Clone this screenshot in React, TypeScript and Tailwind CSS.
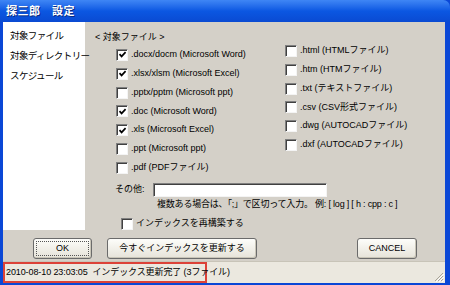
import React from "react";

const FONT = "font-['Liberation_Sans','Noto_Sans_CJK_JP',sans-serif]";

function CheckBox({ checked }: { checked?: boolean }) {
  return (
    <span className="w-[12px] h-[12px] shrink-0 bg-white border border-t-[#808080] border-l-[#808080] border-b-[#f4f4f4] border-r-[#f4f4f4] shadow-[inset_1px_1px_0_#404040] flex items-center justify-center">
      {checked && (
        <svg width="9" height="9" viewBox="0 0 9 9">
          <path d="M1.5 4.2 L3.6 6.4 L7.6 2.2" fill="none" stroke="#000" strokeWidth="1.7" />
        </svg>
      )}
    </span>
  );
}

function Row({ checked, label }: { checked?: boolean; label: string }) {
  return (
    <div className="h-[18.8px] flex items-center gap-[3px]">
      <CheckBox checked={checked} />
      <span className="whitespace-nowrap">{label}</span>
    </div>
  );
}

function Btn({ children, w, focus }: { children: React.ReactNode; w: string; focus?: boolean }) {
  return (
    <div
      className={`${w} h-[21px] rounded-[3px] border border-[#6b6b6b] bg-gradient-to-b from-[#fdfdfa] to-[#e6e3d9] shadow-[inset_-1px_-1px_0_#c9c5b8] flex items-center justify-center p-[2px]`}
    >
      <div className={`w-full h-full flex items-center justify-center whitespace-nowrap ${focus ? "border border-dotted border-[#555]" : ""}`}>
        {children}
      </div>
    </div>
  );
}

export default function App() {
  const left = [
    { c: true, l: ".docx/docm (Microsoft Word)" },
    { c: true, l: ".xlsx/xlsm (Microsoft Excel)" },
    { c: false, l: ".pptx/pptm (Microsoft ppt)" },
    { c: true, l: ".doc (Microsoft Word)" },
    { c: true, l: ".xls (Microsoft Excel)" },
    { c: false, l: ".ppt (Microsoft ppt)" },
    { c: false, l: ".pdf (PDFファイル)" },
  ];
  const right = [
    ".html (HTMLファイル)",
    ".htm (HTMファイル)",
    ".txt (テキストファイル)",
    ".csv (CSV形式ファイル)",
    ".dwg (AUTOCADファイル)",
    ".dxf (AUTOCADファイル)",
  ];
  return (
    <div className={`w-[450px] h-[285px] overflow-hidden flex flex-col bg-[#0a47d6] text-[9px] text-black ${FONT}`}>
      {/* title bar */}
      <div className="h-[22px] shrink-0 rounded-tr-[7px] bg-gradient-to-b from-[#3f86f5] via-[#0b57e2] to-[#0a4ad2] flex items-center pl-[6px]">
        <span className="text-white font-bold text-[11px] tracking-[0.5px] [text-shadow:1px_1px_0_#0a2a80]">探三郎　設定</span>
      </div>
      {/* body */}
      <div className="flex-1 flex flex-col border-l-[3px] border-r-[5px] border-[#0a47d6] bg-[#d4d0c8] min-h-0">
        <div className="h-[208px] flex shrink-0">
          {/* left nav */}
          <div className="w-[82px] bg-white flex flex-col pt-[4px] pl-[7px] tracking-[-0.6px] text-[9.5px]">
            <div className="h-[20px] flex items-center whitespace-nowrap">対象ファイル</div>
            <div className="h-[20px] flex items-center whitespace-nowrap">対象ディレクトリー</div>
            <div className="h-[20px] flex items-center whitespace-nowrap">スケジュール</div>
          </div>
          {/* main pane */}
          <div className="flex-1 flex flex-col">
            <div className="h-[12px] mt-[10px] pl-[10px] flex items-center whitespace-nowrap">&lt; 対象ファイル &gt;</div>
            <div className="flex pl-[31px] mt-[1.6px]">
              <div className="w-[169px] flex flex-col">
                {left.map((r) => (
                  <Row key={r.l} checked={r.c} label={r.l} />
                ))}
              </div>
              <div className="flex flex-col -mt-[4px]">
                {right.map((r) => (
                  <Row key={r} label={r} />
                ))}
              </div>
            </div>
            <div className="flex items-center mt-[6px] pl-[30px] h-[14px]">
              <span className="w-[38px] whitespace-nowrap">その他:</span>
              <div className="w-[174px] h-[14px] bg-white border border-t-[#808080] border-l-[#808080] border-b-[#f4f4f4] border-r-[#f4f4f4] shadow-[inset_1px_1px_0_#404040]" />
            </div>
            <div className="h-[12px] mt-[2px] pl-[72px] flex items-center whitespace-nowrap tracking-[-0.2px]">
              複数ある場合は、「;」で区切って入力。 例: [ log ] [ h : cpp : c ]
            </div>
            <div className="h-[12px] mt-[7px] pl-[36px] flex items-center gap-[3px]">
              <CheckBox />
              <span className="whitespace-nowrap">インデックスを再構築する</span>
            </div>
          </div>
        </div>
        {/* buttons */}
        <div className="h-[31px] shrink-0 flex items-start pt-[8px] pl-[30px]">
          <Btn w="w-[59px]" focus>OK</Btn>
          <div className="w-[15px]" />
          <Btn w="w-[150px]">今すぐインデックスを更新する</Btn>
          <div className="w-[100px]" />
          <Btn w="w-[60px]">CANCEL</Btn>
        </div>
        {/* status bar */}
        <div className="h-[22px] shrink-0 bg-[#ebe8df] border-t border-[#c8c4b8] flex items-stretch justify-between">
          <div className="w-[204px] border-2 border-[#dc4238] flex items-center pl-[1px] whitespace-pre tracking-[-0.1px]">
            2010-08-10 23:03:05  インデックス更新完了 (3ファイル)
          </div>
          <div className="flex items-end pb-[1px] pr-[1px]">
            <svg width="10" height="10" viewBox="0 0 10 10">
              <path d="M9 1 L1 9 M9 4 L4 9 M9 7 L7 9" stroke="#a8a498" strokeWidth="1" />
              <path d="M10 2 L2 10 M10 5 L5 10 M10 8 L8 10" stroke="#fff" strokeWidth="1" />
            </svg>
          </div>
        </div>
      </div>
      <div className="h-[2px] shrink-0 bg-[#0a47d6]" />
    </div>
  );
}
